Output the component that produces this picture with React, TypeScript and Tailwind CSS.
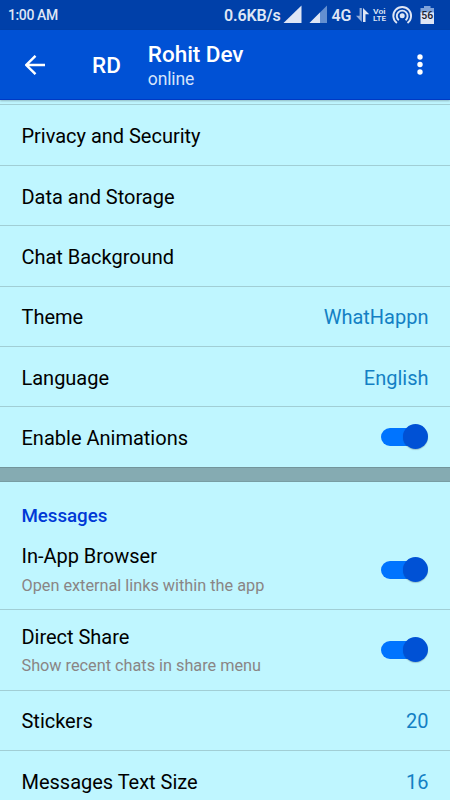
import type { ReactNode } from "react"

interface SettingRowProps {
  label: string
  hint?: string
  children?: ReactNode
}

function Toggle() {
  return (
    <div className="relative mr-px h-6 w-[47px]">
      <div className="absolute top-[3px] left-0 h-[18px] w-[40px] rounded-full bg-[#0074ff]" />
      <div className="absolute top-[-1px] right-0 size-[25px] rounded-full bg-[#0051d5] shadow-[0_1px_1px_rgba(0,0,0,0.2)]" />
    </div>
  )
}

function Value({ children }: { children: ReactNode }) {
  return <span className="pt-[2px] text-[20px] leading-6 text-[#1380c4]">{children}</span>
}

function SettingRow({ label, hint, children }: SettingRowProps) {
  return (
    <div
      className={
        hint
          ? "flex h-[80.4px] items-center justify-between border-b border-[#a1ced5] pr-[21.5px] pl-[21.5px]"
          : "flex h-[60.4px] items-center justify-between border-b border-[#a1ced5] pr-[21.5px] pl-[21.5px]"
      }
    >
      <div className={hint ? "pt-px" : "pt-[2px]"}>
        <p className="text-[20px] leading-6 tracking-[-0.02px] text-black">{label}</p>
        {hint && <p className="mt-[7.5px] text-[16.25px] leading-5 text-[#8a8585]">{hint}</p>}
      </div>
      {children}
    </div>
  )
}

function StatusIcons() {
  return (
    <svg width="170" height="30" viewBox="280 0 170 30" className="shrink-0" fill="#dfe6f5">
      {/* signal */}
      <path d="M301.5 5.5V23H283.5Z" />
      <path d="M327 5.5V23H309.5Z" fill="#648fd0" />
      <path d="M320 12.5V23H309.5Z" />
      <text x="331.5" y="21.3" fontSize="17" fontWeight="600" textLength="20" lengthAdjust="spacingAndGlyphs" className="font-[Roboto]">
        4G
      </text>
      {/* data arrows */}
      <path d="M359.6 8h2.2v14l-5.8-6.2h3.6z" fill="#8facdc" />
      <path d="M363 8l6.2 6.2h-3.7V22H363z" />
      {/* VoLTE */}
      <text x="373" y="14" fontSize="7.5" fontWeight="600" textLength="12.5" lengthAdjust="spacingAndGlyphs" className="font-[Roboto]">
        Voi
      </text>
      <text x="373" y="21" fontSize="7.5" fontWeight="600" textLength="13" lengthAdjust="spacingAndGlyphs" className="font-[Roboto]">
        LTE
      </text>
      {/* hotspot */}
      <circle cx="402.2" cy="15.8" r="2.5" />
      <g fill="none" stroke="#dfe6f5" strokeWidth="1.9">
        <path d="M398.8 20.2a5.4 5.4 0 1 1 6.8 0" />
        <path d="M396.9 23a8.9 8.9 0 1 1 10.6 0" />
      </g>
      {/* battery */}
      <path d="M424 6h6.5v2h3.5v6h-13.5V8H424z" fill="#7fa3da" />
      <path d="M420.5 12.5H434V24h-13.5z" />
      <text x="421.3" y="19.2" fontSize="10.5" fontWeight="500" fill="#1b2230" className="font-[Roboto]">
        56
      </text>
    </svg>
  )
}

export default function App() {
  return (
    <div className="h-[800px] w-[450px] overflow-hidden bg-[#bff6ff] font-['Roboto',sans-serif]">
      <div className="flex h-[30px] items-center bg-[#0040a9] pl-2 text-[#dfe6f5]">
        <span className="pt-px text-[14px] font-medium tracking-[-0.4px]">1:00 AM</span>
        <span className="mr-[-0.5px] ml-auto pt-px text-[16px] font-semibold tracking-[-0.15px]">0.6KB/s</span>
        <StatusIcons />
      </div>

      <header className="relative flex h-[70px] items-center border-b border-[#0039c4] bg-[#0051d5] text-white shadow-[0_1px_2px_rgba(0,0,0,0.25)]">
        <svg width="20" height="20" viewBox="0 0 20 20" className="ml-[25px]" fill="none" stroke="white" strokeWidth="2.4">
          <path d="M20 10H2M10.5 .8L1.3 10l9.2 9.2" />
        </svg>
        <span className="ml-[47px] pt-[2px] text-[22.5px] font-medium">RD</span>
        <div className="ml-[27px] pt-[2px]">
          <h1 className="text-[22.5px] leading-[27px] font-medium tracking-[-0.05px]">Rohit Dev</h1>
          <p className="text-[17.5px] leading-[23px] tracking-[-0.15px] text-[#d6e4fb]">online</p>
        </div>
        <svg width="6" height="21" viewBox="0 0 6 21" className="mr-[27px] ml-auto" fill="white">
          <circle cx="3" cy="3" r="2.7" />
          <circle cx="3" cy="10.5" r="2.7" />
          <circle cx="3" cy="18" r="2.7" />
        </svg>
      </header>

      <div className="h-[5px] border-b border-[#a1ced5]" />
      <div className="h-[0.5px]" />
      <SettingRow label="Privacy and Security" />
      <SettingRow label="Data and Storage" />
      <SettingRow label="Chat Background" />
      <SettingRow label="Theme">
        <Value>WhatHappn</Value>
      </SettingRow>
      <SettingRow label="Language">
        <Value>English</Value>
      </SettingRow>
      <div className="flex h-[59.5px] items-center justify-between pr-[21.5px] pl-[21.5px]">
        <p className="pt-[2px] text-[20px] leading-6 text-black">Enable Animations</p>
        <Toggle />
      </div>

      <div className="h-[15px] border-t border-b border-t-[#72959b] border-b-[#789da3] bg-[#85abb2]" />

      <h2 className="flex h-[48px] items-end pb-[2px] pl-[21.5px] text-[18.75px] leading-6 font-medium tracking-[-0.05px] text-[#0039d6]">
        Messages
      </h2>
      <SettingRow label="In-App Browser" hint="Open external links within the app">
        <Toggle />
      </SettingRow>
      <SettingRow label="Direct Share" hint="Show recent chats in share menu">
        <Toggle />
      </SettingRow>
      <SettingRow label="Stickers">
        <Value>20</Value>
      </SettingRow>
      <SettingRow label="Messages Text Size">
        <Value>16</Value>
      </SettingRow>
    </div>
  )
}
